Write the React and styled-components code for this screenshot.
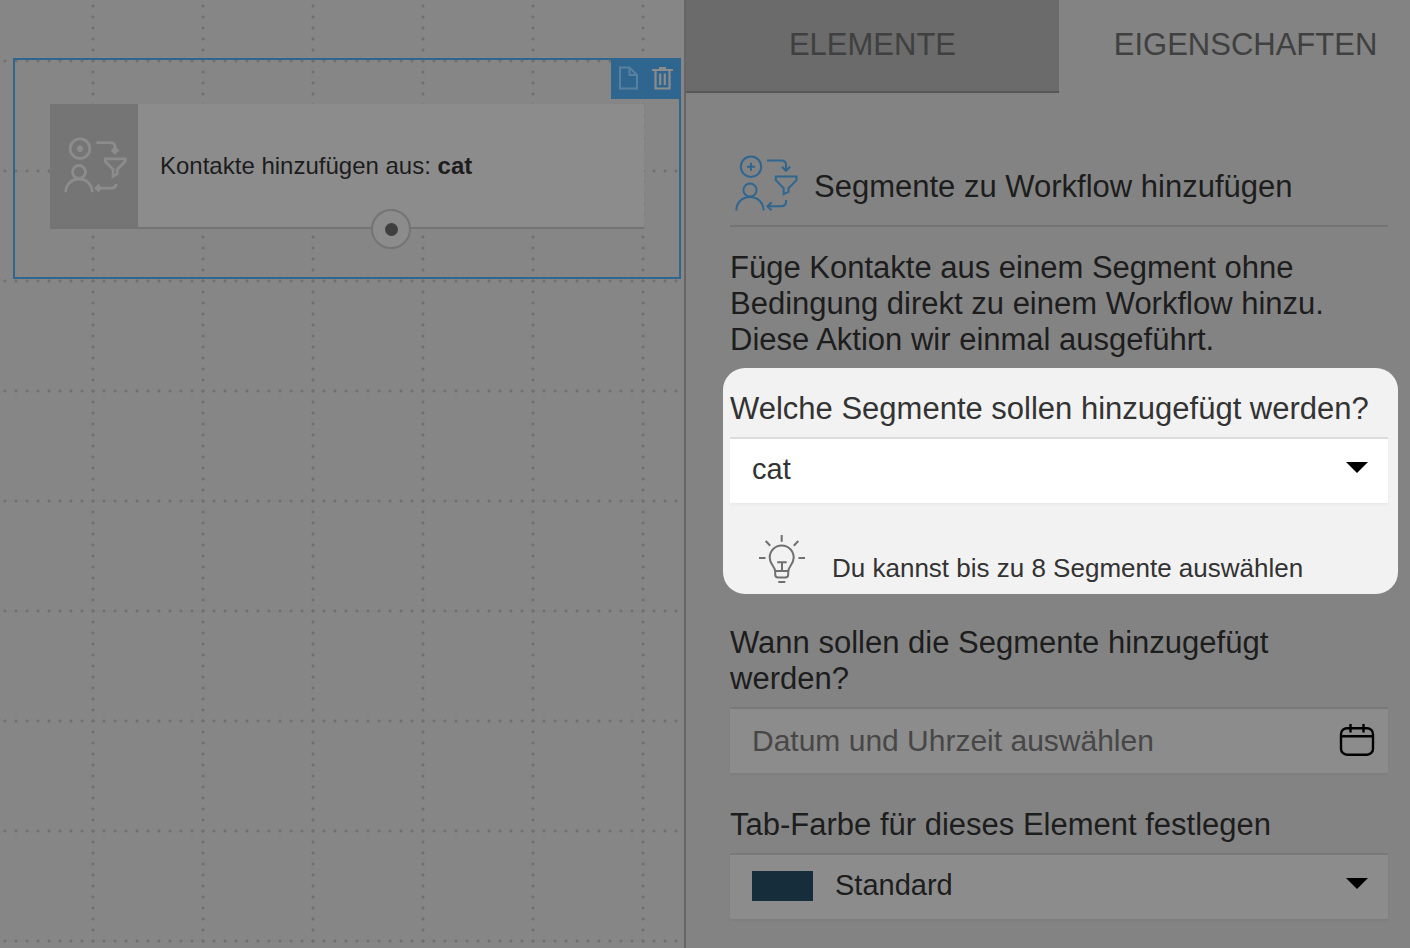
import React, { useState } from "react";
import styled, { createGlobalStyle, ThemeProvider } from "styled-components";

const theme = {
  canvas: "#868686",
  panel: "#838383",
  surface: "#8c8c8c",
  line: "#747474",
  tab: "#6b6b6b",
  blue: "#2f6690",
  text: "#1d1d1d",
  muted: "#3f3f3f",
  focusBg: "#f2f2f2",
  focusText: "#333333",
};

const GlobalStyle = createGlobalStyle`
  * {
    box-sizing: border-box;
  }

  body {
    margin: 0;
    background-color: #838383;
    font-family: "Liberation Sans", Helvetica, Arial, sans-serif;
  }

  button, input, select {
    font-family: inherit;
    margin: 0;
  }
`;

const Page = styled.div`
  display: grid;
  grid-template-columns: 684fr 726fr;
  min-height: 100vh;
  color: ${({ theme }) => theme.text};
`;

const Canvas = styled.main`
  padding: 58px 3px 0 13px;
  background-color: ${({ theme }) => theme.canvas};
  background-image: radial-gradient(
      circle at 5px 61px,
      #707070 1px,
      transparent 2px
    ),
    radial-gradient(circle at 93px 6px, #707070 1px, transparent 2px);
  background-size: 11px 110px, 110px 11px;
`;

const Selection = styled.div`
  position: relative;
  padding: 44px 35px 48px;
  border: 2px solid ${({ theme }) => theme.blue};
`;

const NodeActions = styled.div`
  position: absolute;
  top: -2px;
  right: -2px;
  display: flex;
  align-items: center;
  justify-content: space-between;
  width: 70px;
  height: 41px;
  padding: 0 8px 1px;
  background-color: ${({ theme }) => theme.blue};
`;

const IconButton = styled.button`
  display: flex;
  padding: 0;
  border: 0;
  background: none;
  color: ${({ $faded }) => ($faded ? "#58809c" : "#8c8c8c")};
  cursor: pointer;
`;

const NodeCard = styled.div`
  display: flex;
  height: 125px;
  background-color: ${({ theme }) => theme.surface};
  border-bottom: 2px solid ${({ theme }) => theme.line};
`;

const NodeIcon = styled.div`
  display: flex;
  align-items: center;
  justify-content: center;
  flex: 0 0 88px;
  padding: 0 0 2px 2px;
  background-color: #757575;
  color: #8c8c8c;
`;

const NodeBody = styled.div`
  position: relative;
  display: flex;
  flex: 1;
  align-items: center;
  padding-left: 22px;
  font-size: 24px;
`;

const NodeText = styled.p`
  margin: 0;
`;

const Connector = styled.button`
  position: absolute;
  bottom: -22px;
  left: 50%;
  display: flex;
  align-items: center;
  justify-content: center;
  width: 40px;
  height: 40px;
  padding: 0;
  border: 2px solid ${({ theme }) => theme.line};
  border-radius: 50%;
  background-color: ${({ theme }) => theme.surface};
  transform: translateX(-50%);

  &::after {
    content: "";
    width: 13px;
    height: 13px;
    border-radius: 50%;
    background-color: ${({ theme }) => theme.muted};
  }
`;

const Sidebar = styled.aside`
  min-width: 0;
  overflow: hidden;
  border-left: 2px solid #666666;
  background-color: ${({ theme }) => theme.panel};
`;

const Tabs = styled.div`
  display: flex;
`;

const Tab = styled.button`
  flex: 0 0 373px;
  height: 93px;
  padding: 0 0 2px;
  border: 0;
  border-bottom: 2px solid ${({ $active }) => ($active ? "#838383" : "#575757")};
  background-color: ${({ theme, $active }) =>
    $active ? theme.panel : theme.tab};
  color: #404040;
  font-size: 31px;
  cursor: pointer;
`;

const Panel = styled.div`
  padding: 61px 22px 29px 44px;
  font-size: 31px;
  line-height: 36px;
`;

const PanelHeader = styled.header`
  display: flex;
  align-items: center;
  gap: 16px;
  height: 73px;
  padding: 0 0 13px 4px;
  border-bottom: 2px solid ${({ theme }) => theme.line};
  color: ${({ theme }) => theme.blue};
`;

const PanelTitle = styled.h1`
  margin: 0;
  padding-top: 8px;
  color: ${({ theme }) => theme.text};
  font-size: 31px;
  font-weight: 400;
`;

const Description = styled.p`
  margin: 23px 0 10px;
`;

const Spotlight = styled.section`
  margin: 0 -10px 31px -7px;
  padding: 23px 10px 8px 7px;
  border-radius: 22px;
  background-color: ${({ theme }) => theme.focusBg};
  color: ${({ theme }) => theme.focusText};
`;

const Label = styled.label`
  display: block;
  margin-bottom: 10px;
`;

const Field = styled.div`
  position: relative;
  display: flex;
  align-items: center;
  height: 66px;
  padding-bottom: 2px;
  border-top: 2px solid ${({ $focus }) => ($focus ? "#dcdcdc" : "#797979")};
  background-color: ${({ theme, $focus }) => ($focus ? "#fff" : theme.surface)};
  box-shadow: 0 2px 2px rgba(0, 0, 0, 0.04);

  & + label {
    margin-top: 34px;
  }
`;

const Select = styled.select`
  flex: 1;
  min-width: 0;
  height: 100%;
  padding: 0 60px 2px 22px;
  border: 0;
  background: none;
  color: inherit;
  font-size: 29px;
  appearance: none;
`;

const DateInput = styled.input`
  flex: 1;
  min-width: 0;
  height: 100%;
  padding: 2px 60px 0 22px;
  border: 0;
  background: none;
  color: inherit;
  font-size: 30px;

  &::placeholder {
    color: #474747;
    opacity: 1;
  }
`;

const FieldIcon = styled.span`
  position: absolute;
  top: 0;
  right: 13px;
  display: flex;
  align-items: center;
  justify-content: center;
  width: 36px;
  height: ${({ $large }) => ($large ? "62px" : "57px")};
  color: #000;
  pointer-events: none;
`;

const Swatch = styled.span`
  width: 61px;
  height: 30px;
  margin-left: 22px;
  background-color: #162d3c;
`;

const Hint = styled.p`
  display: flex;
  align-items: flex-start;
  gap: 26px;
  margin: 31px 0 0 28px;
  font-size: 26px;

  svg {
    color: #707070;
  }

  span {
    padding-top: 16px;
  }
`;

const SegmentIcon = () => (
  <svg
    width="64"
    height="58"
    viewBox="0 0 64 58"
    fill="none"
    stroke="currentColor"
    strokeWidth="2"
    aria-hidden="true"
  >
    <circle cx="17" cy="12.7" r="10.2" />
    <path d="M17 8.7v8M13 12.7h8" />
    <circle cx="16" cy="36" r="6.6" />
    <path d="M2.3 56.4C2.3 48.7 8.2 43 15.9 43s13.7 5.7 13.7 13.4" />
    <path d="M33 6.6h14.5q4.5 0 4.5 4.5v5" />
    <path d="M48 12.8l4 4 4-4" />
    <path d="M41.8 22.6h20.7v3.6l-8 8v3.6l-4.8 2.4v-6l-7.9-8z" />
    <path d="M52 46v1.5q0 4.8-5 4.8H33.5" />
    <path d="M37.5 48.3l-4 4 4 4" />
  </svg>
);

// heavier cut of the segment icon, with solid arrow heads
const SegmentIconBold = () => (
  <svg
    width="64"
    height="58"
    viewBox="0 0 64 58"
    fill="none"
    stroke="currentColor"
    strokeWidth="2.8"
    aria-hidden="true"
  >
    <circle cx="17" cy="12.7" r="9.8" />
    <path d="M17 9.5v6.4M13.8 12.7h6.4" strokeWidth="3.6" />
    <circle cx="16" cy="36" r="6.5" />
    <path d="M2.7 56.2C2.7 48.7 8.4 43 15.9 43s13.3 5.7 13.3 13.2" />
    <path d="M33.5 6.6h14q4.5 0 4.5 4.5v2" />
    <path
      d="M47.6 14.4l4.4-4.4 4.4 4.4-4.4 4.4z"
      fill="currentColor"
      stroke="none"
    />
    <path d="M42.3 22.8h19.9v2.6l-8 8v4.6l-4.2 2.4v-7l-7.7-8z" />
    <path d="M53 48q0 4.2-5 4.2H35" />
    <path
      d="M31.2 52.2l4.4-4.4 3 4.4-3 4.4z"
      fill="currentColor"
      stroke="none"
    />
  </svg>
);

const FileIcon = () => (
  <svg
    width="19"
    height="24"
    viewBox="0 0 19 24"
    fill="none"
    stroke="currentColor"
    strokeWidth="2"
    aria-hidden="true"
  >
    <path d="M1 1.5h9.5L18 9v13.5H1zM10.5 1.5V9H18" />
  </svg>
);

const TrashIcon = () => (
  <svg
    width="21"
    height="24"
    viewBox="0 0 21 24"
    fill="none"
    stroke="currentColor"
    strokeWidth="2.2"
    aria-hidden="true"
  >
    <path d="M0 4h21M7 2h7M3.5 4v18.5h14V4M8.2 7.5v11.5M12.8 7.5v11.5" />
  </svg>
);

const BulbIcon = () => (
  <svg
    width="48"
    height="50"
    viewBox="0 0 48 50"
    fill="none"
    stroke="currentColor"
    strokeWidth="2"
    aria-hidden="true"
  >
    <path d="M23.7 1v6.7M7.7 7l4.5 4.7M40.3 7l-4.5 4.7M1 24h6.5M40.5 24H47" />
    <path d="M17.2 37.5c0-5-5.5-7-5.5-14a12 12 0 0 1 24 0c0 7-5.5 9-5.5 14" />
    <path d="M17.2 37h13v3.5q0 3-3 3h-7q-3 0-3-3z" />
    <path d="M19.2 28.3h9.5M24 28.3V37M20.3 48h7" />
  </svg>
);

const CalendarIcon = () => (
  <svg
    width="36"
    height="34"
    viewBox="0 0 36 34"
    fill="none"
    stroke="currentColor"
    strokeWidth="2.4"
    aria-hidden="true"
  >
    <rect x="2" y="5.2" width="32" height="26.5" rx="6" />
    <path d="M2 13.2h32M11.5 1v8.5M24.5 1v8.5" />
  </svg>
);

const CaretIcon = () => (
  <svg width="22" height="11" viewBox="0 0 22 11" aria-hidden="true">
    <path d="M0 0h22L11 11z" fill="currentColor" />
  </svg>
);

const App = () => {
  const [tab, setTab] = useState("properties");
  const [date, setDate] = useState("");

  return (
    <ThemeProvider theme={theme}>
      <GlobalStyle />
      <Page>
        <Canvas>
          <Selection>
            <NodeCard>
              <NodeIcon>
                <SegmentIconBold />
              </NodeIcon>
              <NodeBody>
                <NodeText>
                  Kontakte hinzufügen aus: <strong>cat</strong>
                </NodeText>
                <Connector aria-label="Verbinden" />
              </NodeBody>
            </NodeCard>
            <NodeActions>
              <IconButton $faded aria-label="Notiz">
                <FileIcon />
              </IconButton>
              <IconButton aria-label="Löschen">
                <TrashIcon />
              </IconButton>
            </NodeActions>
          </Selection>
        </Canvas>

        <Sidebar>
          <Tabs>
            <Tab
              $active={tab === "elements"}
              onClick={() => setTab("elements")}
            >
              ELEMENTE
            </Tab>
            <Tab
              $active={tab === "properties"}
              onClick={() => setTab("properties")}
            >
              EIGENSCHAFTEN
            </Tab>
          </Tabs>

          <Panel>
            <PanelHeader>
              <SegmentIcon />
              <PanelTitle>Segmente zu Workflow hinzufügen</PanelTitle>
            </PanelHeader>
            <Description>
              Füge Kontakte aus einem Segment ohne Bedingung direkt zu einem
              Workflow hinzu. Diese Aktion wir einmal ausgeführt.
            </Description>

            <Spotlight>
              <Label htmlFor="segments">
                Welche Segmente sollen hinzugefügt werden?
              </Label>
              <Field $focus>
                <Select id="segments" defaultValue="cat">
                  <option value="cat">cat</option>
                </Select>
                <FieldIcon>
                  <CaretIcon />
                </FieldIcon>
              </Field>
              <Hint>
                <BulbIcon />
                <span>Du kannst bis zu 8 Segmente auswählen</span>
              </Hint>
            </Spotlight>

            <Label htmlFor="date">
              Wann sollen die Segmente hinzugefügt werden?
            </Label>
            <Field>
              <DateInput
                id="date"
                type="text"
                placeholder="Datum und Uhrzeit auswählen"
                value={date}
                onChange={(e) => setDate(e.target.value)}
              />
              <FieldIcon $large>
                <CalendarIcon />
              </FieldIcon>
            </Field>

            <Label htmlFor="color">Tab-Farbe für dieses Element festlegen</Label>
            <Field>
              <Swatch />
              <Select id="color" defaultValue="default">
                <option value="default">Standard</option>
              </Select>
              <FieldIcon>
                <CaretIcon />
              </FieldIcon>
            </Field>
          </Panel>
        </Sidebar>
      </Page>
    </ThemeProvider>
  );
};

export default App;
